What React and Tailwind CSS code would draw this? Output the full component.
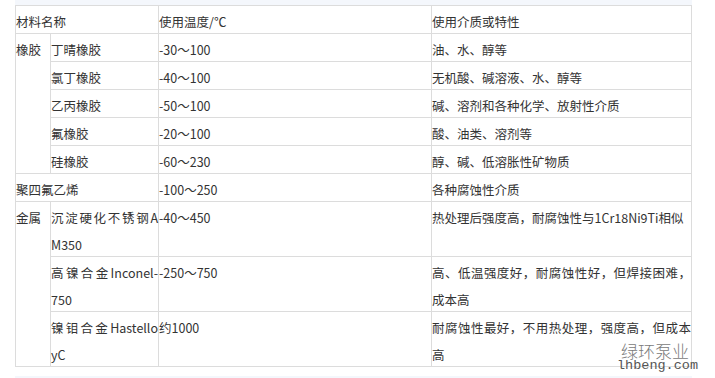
import React from "react";

// one table cell, lines are given explicitly so the wrap matches the page
function Cell({ lines, className = "", justify = false }) {
  return (
    <div className={"border-t border-l border-[#dcdcdc] leading-[27px] " + className}>
      <div className="translate-y-[2px]">
        {lines.map((line, i) => (
          <div
            key={i}
            className={
              justify && i < lines.length - 1
                ? "whitespace-nowrap text-justify [text-align-last:justify]"
                : "whitespace-nowrap"
            }
          >
            {line}
          </div>
        ))}
      </div>
    </div>
  );
}

export default function App() {
  return (
    <div className="relative h-[378px] w-[715px] overflow-hidden bg-white font-['Noto_Sans_CJK_SC',sans-serif] text-[12.5px] text-[#333]">
      <div className="ml-[15px] h-[5px] w-[677px] bg-[#f4f7fc]" />

      <div className="ml-[15px] grid w-[677px] grid-cols-[35px_108px_273px_260px] border-r border-b border-[#dcdcdc]">
        {/* header */}
        <Cell className="col-span-2" lines={["材料名称"]} />
        <Cell lines={["使用温度/℃"]} />
        <Cell lines={["使用介质或特性"]} />

        {/* rubber */}
        <Cell className="row-span-5" lines={["橡胶"]} />
        <Cell lines={["丁晴橡胶"]} />
        <Cell lines={["-30～100"]} />
        <Cell lines={["油、水、醇等"]} />

        <Cell lines={["氯丁橡胶"]} />
        <Cell lines={["-40～100"]} />
        <Cell lines={["无机酸、碱溶液、水、醇等"]} />

        <Cell lines={["乙丙橡胶"]} />
        <Cell lines={["-50～100"]} />
        <Cell lines={["碱、溶剂和各种化学、放射性介质"]} />

        <Cell lines={["氟橡胶"]} />
        <Cell lines={["-20～100"]} />
        <Cell lines={["酸、油类、溶剂等"]} />

        <Cell lines={["硅橡胶"]} />
        <Cell lines={["-60～230"]} />
        <Cell lines={["醇、碱、低溶胀性矿物质"]} />

        {/* ptfe */}
        <Cell className="col-span-2" lines={["聚四氟乙烯"]} />
        <Cell lines={["-100～250"]} />
        <Cell lines={["各种腐蚀性介质"]} />

        {/* metal */}
        <Cell className="row-span-3" lines={["金属"]} />
        <Cell justify lines={["沉淀硬化不锈钢A", "M350"]} />
        <Cell lines={["-40～450", ""]} />
        <Cell lines={["热处理后强度高，耐腐蚀性与1Cr18Ni9Ti相似", ""]} />

        <Cell justify lines={["高镍合金Inconel-", "750"]} />
        <Cell lines={["-250～750"]} />
        <Cell justify lines={["高、低温强度好，耐腐蚀性好，但焊接困难，", "成本高"]} />

        <Cell justify lines={["镍钼合金Hastello", "yC"]} />
        <Cell lines={["约1000"]} />
        <Cell justify lines={["耐腐蚀性最好，不用热处理，强度高，但成本", "高"]} />
      </div>

      <div className="ml-[15px] mt-[9px] h-[10px] w-[677px] bg-[#f4f7fc]" />

      {/* watermark */}
      <div className="absolute left-[621px] top-[342px] text-[17px] font-light leading-none text-[#7a7a7a]">
        绿环泵业
      </div>
      <div className="absolute left-[617px] top-[359px] font-mono text-[13.5px] leading-none text-[#555]">
        lhbeng.com
      </div>
    </div>
  );
}
